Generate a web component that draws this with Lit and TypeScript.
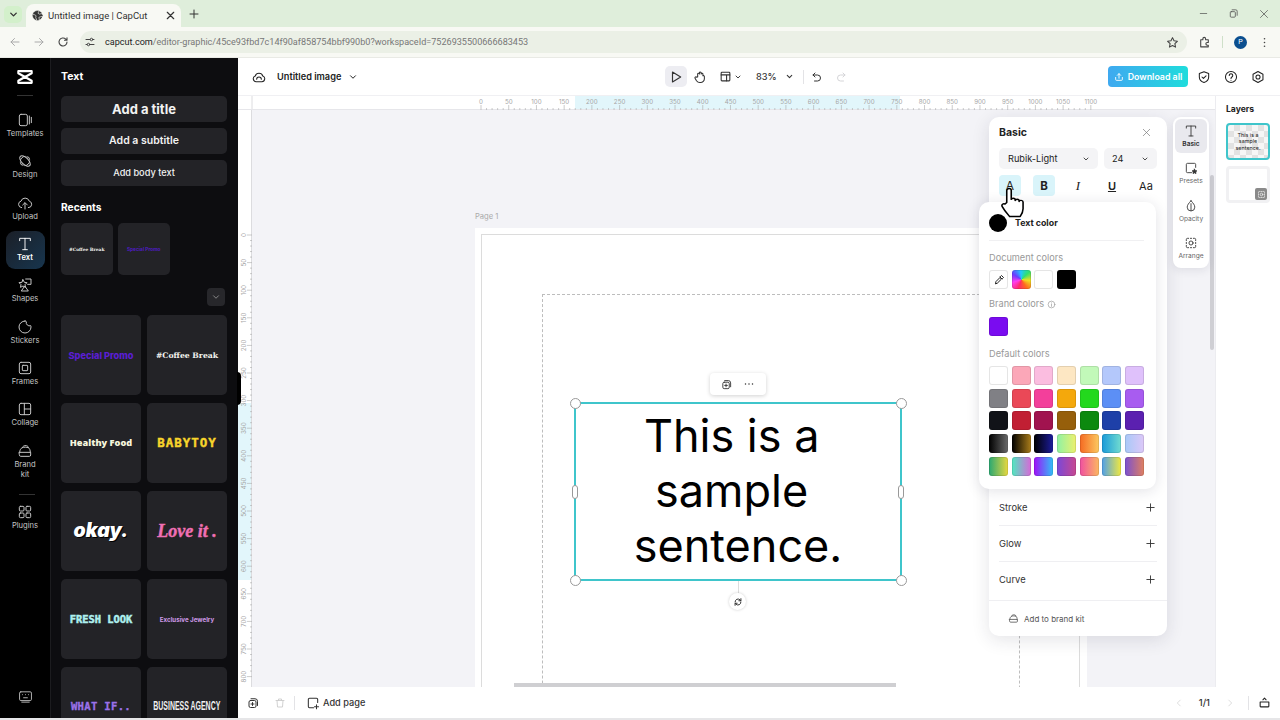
import { LitElement, html, css, svg } from "lit";
import { customElement } from "lit/decorators.js";

const ic = (size: number, body: unknown, sw = 1.8) => html`<svg class="ic" width=${size} height=${size} viewBox="0 0 24 24" fill="none" stroke="currentColor" stroke-width=${sw} stroke-linecap="round" stroke-linejoin="round">${body}</svg>`;

const P = {
  templates: svg`<rect x="3.5" y="3.5" width="12" height="17" rx="2.5"/><path d="M18.5 6v12M21.5 8v8"/>`,
  design: svg`<ellipse cx="12" cy="12" rx="10" ry="5" transform="rotate(45 12 12)"/><path d="M5 12a7 7 0 0 1 7-7M19 12a7 7 0 0 1-7 7M15 5.5a4 4 0 0 1 4 4M9 18.5a4 4 0 0 1-4-4"/>`,
  upload: svg`<path d="M7 19a5 5 0 0 1-1-9.8 6.5 6.5 0 0 1 12.4 0A5 5 0 0 1 17 19"/><path d="M12 21v-9M8.5 15l3.5-3.5 3.5 3.5"/>`,
  text: svg`<path d="M4 7V3.5h16V7M12 3.5v17M8.5 20.5h7"/>`,
  shapes: svg`<path d="M13 3h8v8h-5M9 4l2 4 4 .5-3 3 .8 4L9 13.5 5.2 15.5 6 11.5l-3-3 4-.5z"/><path d="M12 14l5 7H7z"/>`,
  stickers: svg`<path d="M12 3a9 9 0 1 0 9 9c0-1-.2-1.500-.4-2A5 5 0 0 1 14 4c-.5-.7-1.200-1-2-1z"/>`,
  frames: svg`<rect x="3.500" y="3.500" width="17" height="17" rx="2.500"/><rect x="8" y="8" width="8" height="8" rx="1"/>`,
  collage: svg`<rect x="3.500" y="3.500" width="17" height="17" rx="2.500"/><path d="M11 3.500v17M11 12h9.500"/>`,
  brand: svg`<path d="M3.500 14h17v4a2 2 0 0 1-2 2h-13a2 2 0 0 1-2-2zM4 14c0-4 2-6 4-7 .5-2 3-3.500 6-3 2.500.5 3 2 3 3 2 1 3 4 3 7M8 7c3-1 6-1 9 0"/>`,
  plugins: svg`<rect x="3.500" y="3.500" width="7" height="7" rx="1.500"/><rect x="13.500" y="3.500" width="7" height="7" rx="1.500"/><rect x="3.500" y="13.500" width="7" height="7" rx="1.500"/><rect x="13.500" y="13.500" width="7" height="7" rx="1.500"/>`,
  keyboard: svg`<rect x="2.500" y="4.500" width="19" height="14" rx="2"/><path d="M7 9h.01M12 9h.01M17 9h.01M9 14h6M6 21h12"/>`,
  chevD: svg`<path d="M6 9l6 6 6-6"/>`,
  chevL: svg`<path d="M15 5l-7 7 7 7"/>`,
  chevR: svg`<path d="M9 5l7 7-7 7"/>`,
  close: svg`<path d="M5 5l14 14M19 5L5 19"/>`,
  plus: svg`<path d="M12 4v16M4 12h16"/>`,
  cloud: svg`<path d="M7 20a5 5 0 0 1-1.500-9.700 6.800 6.800 0 0 1 13 0A5 5 0 0 1 17 20zM8 16a4 4 0 0 1 8 0"/>`,
  cursor: svg`<path d="M6 3.500l14 8.500-14 8.500z"/>`,
  hand: svg`<path d="M8 12V7a1.500 1.500 0 0 1 3 0V5a1.500 1.500 0 0 1 3 0v2a1.500 1.500 0 0 1 3 0v3a1.500 1.500 0 0 1 2.500 1v4a6.500 6.500 0 0 1-6.500 6.500h-1.500c-2.500 0-4-1-5.500-3L3.500 14c-.8-1.500 1-3 2.300-1.800z" fill="none"/>`,
  layout: svg`<rect x="4" y="4" width="16" height="16" rx="1.500"/><path d="M4 9h16M14 9v11"/>`,
  undo: svg`<path d="M8 4L4 8l4 4M4 8h9a6 6 0 0 1 0 12H7"/>`,
  redo: svg`<path d="M16 4l4 4-4 4M20 8h-9a6 6 0 0 0 0 12h6"/>`,
  shield: svg`<path d="M12 3l8 3v6c0 5-3.500 8-8 9.500C7.500 20 4 17 4 12V6zM8.500 12l2.500 2.500 4.500-4.500"/>`,
  help: svg`<circle cx="12" cy="12" r="9.500"/><path d="M9 9.500a3 3 0 1 1 4.500 2.600c-1 .6-1.500 1.200-1.500 2.400M12 17.500h.01"/>`,
  settings: svg`<path d="M12 2.500l8.500 4.800v9.400L12 21.500l-8.500-4.800V7.300z"/><circle cx="12" cy="12" r="3.500"/>`,
  share: svg`<path d="M4 13v5a2 2 0 0 0 2 2h12a2 2 0 0 0 2-2v-5M12 15V4M8 8l4-4 4 4"/>`,
  copy: svg`<rect x="4" y="7" width="14" height="14" rx="3"/><path d="M8 3.500h8a5 5 0 0 1 5 5V17M11 11v6M8 14h6"/>`,
  dots: svg`<path d="M5 12h.01M12 12h.01M19 12h.01"/>`,
  rotate: svg`<path d="M5 12a7 7 0 0 1 12-5l2 2M19 12a7 7 0 0 1-12 5l-2-2M19 4v5h-5M5 20v-5h5"/>`,
  presets: svg`<path d="M20 11V6a2 2 0 0 0-2-2H6a2 2 0 0 0-2 2v12a2 2 0 0 0 2 2h7"/><path d="M18 14l1.200 2.500 2.800.4-2 1.900.5 2.700-2.500-1.300-2.500 1.300.5-2.700-2-1.900 2.800-.4z" fill="currentColor"/>`,
  drop: svg`<path d="M12 3c4 4.500 6.500 7.500 6.500 11a6.500 6.500 0 0 1-13 0C5.500 10.500 8 7.500 12 3zM12 8v12"/>`,
  arrange: svg`<path d="M4 8V6a2 2 0 0 1 2-2h2M16 4h2a2 2 0 0 1 2 2v2M20 16v2a2 2 0 0 1-2 2h-2M8 20H6a2 2 0 0 1-2-2v-2M11 4h2M11 20h2M4 11v2M20 11v2"/><circle cx="12" cy="12" r="3.500"/>`,
  trash: svg`<path d="M4 7h16M9 7V4h6v3M6 7l1 13h10l1-13"/>`,
  addpage: svg`<path d="M20 11V6a2 2 0 0 0-2-2H6a2 2 0 0 0-2 2v12a2 2 0 0 0 2 2h7M18 15v7M14.500 18.500h7"/>`,
  bag: svg`<path d="M4 11h16v8a1 1 0 0 1-1 1H5a1 1 0 0 1-1-1zM12 4l-3 3M12 4l3 3"/>`,
  globe: svg`<circle cx="12" cy="12" r="10" fill="currentColor"/><path d="M3 10c3 0 5 1 6 3l-1 3 2 5M15 3l-2 4 3 2 5-1M16 21l-1-5 6-2" stroke="#f8f9f4"/>`,
  back: svg`<path d="M20 12H4M11 5l-7 7 7 7"/>`,
  forward: svg`<path d="M4 12h16M13 5l7 7-7 7"/>`,
  reload: svg`<path d="M20 12a8 8 0 1 1-2.500-5.800L20 8.500M20 3.500v5h-5"/>`,
  tune: svg`<path d="M4 7h8M18 7h2M4 17h2M12 17h8"/><circle cx="15" cy="7" r="2.500"/><circle cx="9" cy="17" r="2.500"/>`,
  star: svg`<path d="M12 3l2.800 5.900 6.200.8-4.600 4.400 1.200 6.400L12 17.400l-5.600 3.100 1.200-6.400L3 9.700l6.200-.8z"/>`,
  ext: svg`<path d="M5 8h4V6a2.500 2.500 0 0 1 5 0v2h5v5h-2a2.500 2.500 0 0 0 0 5h2v3H5z" transform="translate(0 -1)"/>`,
  restore: svg`<rect x="5" y="8" width="11" height="12" rx="2"/><path d="M9 4h8a3 3 0 0 1 3 3v9"/>`,
  kebab: svg`<path d="M12 5h.01M12 12h.01M12 19h.01"/>`,
  pick: svg`<path d="M14 6l4 4M5 19l1-4 8-8 3 3-8 8zM15 5l2-2 4 4-2 2" />`,
  info: svg`<circle cx="12" cy="12" r="9"/><path d="M12 11v6M12 7.500h.01"/>`,
  logo: svg`<path d="M4 5h16v2.500L4 16.500V19h16v-2.500L4 7.500z"/>`,
};

const navItems = [
  ["Templates", P.templates], ["Design", P.design], ["Upload", P.upload], ["Text", P.text],
  ["Shapes", P.shapes], ["Stickers", P.stickers], ["Frames", P.frames], ["Collage", P.collage],
] as const;

const tiles = [
  ["Special Promo", "t-promo"], ["#Coffee Break", "t-coffee"], ["Healthy Food", "t-healthy"], ["BABYTOY", "t-baby"],
  ["okay.", "t-okay"], ["Love it .", "t-love"], ["FRESH LOOK", "t-fresh"], ["Exclusive Jewelry", "t-jewel"],
  ["WHAT IF..", "t-what"], ["BUSINESS AGENCY", "t-biz"],
];

const swatches = [
  "#ffffff", "#fba7b8", "#fbbde0", "#fde7c3", "#c2f9b9", "#b4c8fb", "#dfc1fb",
  "#808085", "#ea4857", "#f33f9b", "#f4a80c", "#23d81d", "#5c8ff5", "#a85cf0",
  "#111318", "#c11f33", "#a1134f", "#965f0b", "#0c890f", "#1e40a8", "#5b20b0",
  "linear-gradient(90deg,#000,#6a6a6a)", "linear-gradient(90deg,#000,#a97c1a)", "linear-gradient(90deg,#000,#1c1c9c)", "linear-gradient(90deg,#8ff2a4,#ecf06e)", "linear-gradient(90deg,#f56a22,#fcc961)", "linear-gradient(90deg,#1a9ad9,#72dcd0)", "linear-gradient(90deg,#a8c9f8,#ddc8f8)",
  "linear-gradient(90deg,#2aa872,#e9d83f)", "linear-gradient(90deg,#50e8c0,#d868d8)", "linear-gradient(90deg,#a010f8,#30c0f8)", "linear-gradient(90deg,#7a48d8,#c84890)", "linear-gradient(90deg,#f050a0,#fcb860)", "linear-gradient(90deg,#50a0e8,#f0e840)", "linear-gradient(90deg,#7a50d0,#e08060)",
];

function topRuler() {
  const o = 243, k = 27.72 / 50;
  const parts: unknown[] = [];
  for (let v = 0; v <= 1100; v += 10) {
    const x = o + v * k;
    const major = v % 50 === 0;
    parts.push(svg`<line x1=${x} x2=${x} y1=${major ? 9 : 12} y2="14" stroke="#aaa" stroke-width=".6"/>`);
    if (major) parts.push(svg`<text x=${x} y="8" text-anchor="middle" class="rt">${v}</text>`);
  }
  return html`<svg class="ruler-top" width="977" height="14" viewBox="0 0 977 14"><rect x="337" width="325" height="14" fill="#e2f6fb"/><line x1="14" x2="14" y1="0" y2="14" stroke="#dcdcdf"/><line x1="0" x2="977" y1="13.500" y2="13.500" stroke="#e6e6ea"/>${parts}</svg>`;
}

function leftRuler() {
  const o = 125, k = 27.6 / 50;
  const parts: unknown[] = [];
  for (let v = 0; v <= 800; v += 10) {
    const y = o + v * k;
    const major = v % 50 === 0;
    parts.push(svg`<line y1=${y} y2=${y} x1=${major ? 9 : 12} x2="14" stroke="#aaa" stroke-width=".6"/>`);
    if (major) parts.push(svg`<text transform="translate(7.500 ${y}) rotate(-90)" text-anchor="middle" class="rt">${v}</text>`);
  }
  return html`<svg class="ruler-left" width="14" height="577" viewBox="0 0 14 577"><rect y="293" width="14" height="177" fill="#e2f6fb"/><line x1="13.500" x2="13.500" y1="0" y2="577" stroke="#dcdcdf"/>${parts}</svg>`;
}

@customElement("app-root")
export class AppRoot extends LitElement {
  static styles = css`
    :host { display: flex; flex-direction: column; width: 1280px; height: 720px; overflow: hidden; font-family: Inter, "Liberation Sans", sans-serif; color: #222; background: #e6e6e8; }
    .ic { display: block; flex: none; }
    .tabs { height: 27px; background: #dfeedb; display: flex; align-items: flex-end; flex: none; color: #333; }
    .tabmenu { width: 18px; height: 17px; margin: 0 0 4px 4px; border-radius: 5px; background: #d3f0cb; display: flex; align-items: center; justify-content: center; }
    .tab { width: 155px; height: 23px; margin-left: 4px; background: #f8f9f4; border-radius: 8px 8px 0 0; display: flex; align-items: center; padding: 0 5px 0 6px; box-sizing: border-box; gap: 5px; font: 9.5px Roboto, sans-serif; color: #333; }
    .tab span { flex: 1; white-space: nowrap; }
    .newtab { margin: 0 0 7px 7px; }
    .winctl { margin-left: auto; display: flex; gap: 19px; padding: 0 10px 7px 0; color: #555; }
    .toolbar { height: 31px; background: #f8f9f4; border-bottom: 1px solid #e9eae5; box-sizing: border-box; display: flex; align-items: center; flex: none; padding-left: 3px; color: #444; }
    .toolbar .nv { width: 24px; display: flex; justify-content: center; }
    .dim { color: #aaa; }
    .url { width: 1107px; margin-left: 5px; height: 22px; border-radius: 11px; background: #ebf0e6; display: flex; align-items: center; padding: 0 8px 0 4px; box-sizing: border-box; flex: none; }
    .url .addr { font: 9.08px Roboto, sans-serif; color: #777; margin-left: 9px; white-space: nowrap; }
    .url .addr b { font-weight: 400; color: #222; }
    .url .ic:last-child { margin-left: auto; }
    .tools-r { display: flex; align-items: center; flex: 1; padding-left: 11px; gap: 11px; }
    .avatar { width: 13px; height: 13px; border-radius: 50%; background: #0b4f8f; color: #fff; font: 7px Roboto, sans-serif; display: flex; align-items: center; justify-content: center; }
    .sepv { width: 1px; height: 12px; background: #cfe0c9; }

    .app { height: 660px; display: flex; flex: none; position: relative; }
    .nav { width: 50px; background: #000; border-right: 1px solid #1c1c1f; display: flex; flex-direction: column; align-items: center; flex: none; padding-bottom: 14px; }
    .logo { height: 37px; display: flex; align-items: center; color: #fff; }
    .navsep { width: 16px; height: 1px; background: #333; flex: none; }
    .navlist { margin-top: 11px; display: flex; flex-direction: column; gap: 3.33px; }
    .nitem { width: 39px; height: 38px; border-radius: 9px; box-sizing: border-box; padding-top: 5px; display: flex; flex-direction: column; align-items: center; color: #c4c4c4; font-size: 7.6px; line-height: 10px; text-align: center; }
    .nitem span { margin-top: 1px; }
    .nitem.active { background: linear-gradient(135deg, #1b1f27, #17354e); color: #fff; font-weight: 600; }
    .nitem.tall { height: 48px; }
    .navsep2 { width: 16px; height: 1px; background: #333; margin: 8px 0 4px 4px; flex: none; }
    .kbd { margin-top: auto; color: #bbb; }

    .panel { width: 187px; background: #0d0d10; color: #fff; padding: 0 11px 0 10px; box-sizing: border-box; overflow: hidden; flex: none; }
    .ptitle { height: 38px; display: flex; align-items: center; font-size: 10.5px; font-weight: 700; padding-bottom: 1px; box-sizing: border-box; }
    .addbtn { height: 26px; border-radius: 5px; background: #232327; display: flex; align-items: center; justify-content: center; margin-bottom: 6px; color: #f2f2f2; padding-bottom: 1px; box-sizing: border-box; }
    .a1 { font-size: 13px; font-weight: 700; }
    .a2 { font-size: 10.5px; font-weight: 600; }
    .a3 { font-size: 9.2px; font-weight: 500; }
    .recents { font-size: 10.2px; font-weight: 700; line-height: 12px; margin-top: 15px; }
    .rrow { display: flex; gap: 5.5px; margin-top: 10px; }
    .rthumb { width: 51.500px; height: 52px; background: #232327; border-radius: 5px; display: flex; align-items: center; justify-content: center; white-space: nowrap; }
    .more { width: 18px; height: 18px; border-radius: 4px; background: #27272b; margin: 13px 2px 0 auto; display: flex; align-items: center; justify-content: center; color: #999; }
    .grid { display: grid; grid-template-columns: 80px 80px; grid-auto-rows: 80px; gap: 8px 6px; margin-top: 9px; }
    .tile { background: #232327; border-radius: 5px; display: flex; align-items: center; justify-content: center; white-space: nowrap; text-align: center; }
    .t-promo { color: #5a1ed2; font: 800 9.2px Inter, sans-serif; }
    .t-coffee { color: #f4f4f0; font: 700 7.7px "DejaVu Serif", serif; }
    .t-coffee2 { color: #f4f4f0; font: 700 4.4px "DejaVu Serif", serif; }
    .t-promo2 { color: #4e1cc0; font: 700 4.8px Inter, sans-serif; }
    .t-healthy { color: #f6f6de; font: 800 9.2px "Open Sans", sans-serif; padding-bottom: 2px; box-sizing: border-box; }
    .t-baby { color: #f8d52b; font: 700 12.5px "DejaVu Sans Mono", monospace; letter-spacing: 1px; -webkit-text-stroke: .4px #f8d52b; padding-bottom: 2px; box-sizing: border-box; }
    .t-okay { color: #fff; font: italic 900 19.5px Inter, sans-serif; text-shadow: 1px 1px 0 #000; padding-bottom: 2px; box-sizing: border-box; }
    .t-love { color: #f070b4; font: italic 700 18px "Liberation Serif", serif; -webkit-text-stroke: .4px #f070b4; }
    .t-fresh { color: #aef0ef; font: 700 10.4px "DejaVu Sans Mono", monospace; -webkit-text-stroke: .5px #aef0ef; }
    .t-jewel { color: #cf9ae8; font: 700 6.2px Inter, sans-serif; }
    .t-what { color: #9b72ea; font: 700 10.6px "DejaVu Sans Mono", monospace; letter-spacing: .3px; -webkit-text-stroke: .3px #9b72ea; padding-bottom: 3px; box-sizing: border-box; }
    .t-biz { color: #f0f0f0; font: 700 12px "Liberation Sans", sans-serif; padding-bottom: 3px; box-sizing: border-box; }
    .t-biz span { display: inline-block; transform: scaleX(.58); }
    .collapse { position: absolute; left: 237px; top: 314px; width: 4px; height: 33px; background: #000; border-radius: 0 4px 4px 0; }

    .main { flex: 1; display: flex; flex-direction: column; min-width: 0; background: #fff; }
    .header { height: 38px; display: flex; align-items: center; flex: none; box-sizing: border-box; padding-left: 14px; border-bottom: 1px solid #f0f0f3; position: relative; }
    .title { font-size: 9.2px; font-weight: 600; margin-left: 11px; color: #222; white-space: nowrap; }
    .hl { display: flex; align-items: center; width: 413px; flex: none; color: #222; }
    .hl .chev { margin-left: 7px; }
    .hc { display: flex; align-items: center; color: #333; flex: none; }
    .cursorb { width: 22px; height: 21px; border-radius: 5px; background: #ededf2; display: flex; align-items: center; justify-content: center; }
    .h-hand { margin-left: 6px; } .h-layout { margin-left: 11.5px; } .h-chev1 { margin-left: 2.5px; }
    .zoom { font-size: 9.2px; font-weight: 500; margin-left: 14px; width: 20px; white-space: nowrap; }
    .h-chev2 { margin-left: 8.5px; }
    .vline { width: 1px; height: 14px; background: #e3e3e6; flex: none; }
    .h-vl { margin: 0 7px 0 9.5px; }
    .h-redo { margin-left: 12px; color: #d5d5d8; }
    .download { margin-left: auto; width: 80px; height: 21px; border-radius: 4px; background: linear-gradient(90deg, #3fa9f0, #1fdcdc); color: #fff; font-size: 8.8px; font-weight: 600; display: flex; align-items: center; justify-content: center; gap: 4px; white-space: nowrap; }
    .hr { display: flex; gap: 13px; margin: 0 15px 0 9px; color: #222; }

    .middle { flex: 1; display: flex; min-height: 0; }
    .work { flex: 1; display: flex; flex-direction: column; min-width: 0; background: #fff; }
    .ruler-top, .ruler-left { display: block; flex: none; }
    .rt { font: 6.2px Inter, sans-serif; fill: #a6a6a6; }
    .work-row { flex: 1; display: flex; min-height: 0; }
    .canvas { position: relative; flex: 1; background: #f3f3f7; overflow: hidden; }
    .pagelabel { position: absolute; left: 223px; top: 102px; font-size: 7.6px; color: #aaa; }
    .page { position: absolute; left: 223px; top: 118px; width: 612px; height: 500px; background: #fff; }
    .bleed { position: absolute; left: 6px; top: 6px; width: 599px; height: 500px; border: 1px solid #dcdcdc; box-sizing: border-box; }
    .safe { position: absolute; left: 67px; top: 66px; width: 478px; height: 500px; border: 1px dashed #bdbdbd; box-sizing: border-box; }
    .sel { position: absolute; left: 322px; top: 292px; width: 328px; height: 179px; border: 2px solid #3fc5cb; box-sizing: border-box; display: flex; flex-direction: column; align-items: center; }
    .copy { white-space: pre; font: 400 45px/55.200px Inter, sans-serif; color: #000; text-align: center; margin-top: 4px; }
    .hd { position: absolute; background: #fff; border: 1px solid #999; box-sizing: border-box; }
    .c { width: 11px; height: 11px; border-radius: 50%; }
    .tl { left: -6.500px; top: -6.500px; } .tr { right: -6.500px; top: -6.500px; } .bl { left: -6.500px; bottom: -6.500px; } .br { right: -6.500px; bottom: -6.500px; }
    .s { width: 6px; height: 14px; border-radius: 3px; top: 81px; }
    .ml { left: -4px; } .mr { right: -4px; }
    .minimenu { position: absolute; left: 458px; top: 263px; width: 56px; height: 22px; background: #fff; border-radius: 4px; box-shadow: 0 1px 4px rgba(0,0,0,.18); display: flex; align-items: center; justify-content: center; gap: 11px; color: #333; }
    .stem { position: absolute; left: 485.500px; top: 471px; width: 1px; height: 12px; background: #ddd; }
    .rot { position: absolute; left: 477px; top: 483px; width: 17px; height: 17px; border-radius: 50%; background: #fff; box-shadow: 0 0 3px rgba(0,0,0,.2); display: flex; align-items: center; justify-content: center; color: #333; }
    .hbar { position: absolute; left: 262px; top: 573px; width: 382px; height: 4px; background: #cfcfd2; }
    .vbar { position: absolute; left: 958px; top: 65px; width: 4px; height: 175px; background: #cfcfd4; border-radius: 2px; }

    .basic { position: absolute; left: 737px; top: 7px; width: 178px; height: 519px; background: #fff; border-radius: 10px; box-shadow: 0 4px 18px rgba(30,30,60,.12); display: flex; flex-direction: column; padding: 0 10px; box-sizing: border-box; }
    .bhead { height: 31px; display: flex; align-items: center; justify-content: space-between; font-size: 10.5px; font-weight: 700; padding-right: 5px; flex: none; }
    .bhead .ic { color: #777; }
    .selects { display: flex; gap: 6px; flex: none; }
    .select { height: 21px; border-radius: 5px; background: #f4f4f6; display: flex; align-items: center; justify-content: space-between; padding: 0 8px 0 9px; box-sizing: border-box; font-size: 9.2px; color: #222; }
    .f1 { width: 99px; } .f2 { width: 53px; padding-left: 8px; }
    .fmts { display: flex; margin-top: 6px; justify-content: space-between; padding-right: 0; flex: none; }
    .fb { width: 22px; height: 21px; border-radius: 4px; display: flex; align-items: center; justify-content: center; font-size: 12px; color: #222; margin-right: 12px; }
    .fb.on { background: #d9f4fa; }
    .fb.b { font-weight: 700; font-size: 11.5px; }
    .fb.i { font-style: italic; font-family: "Liberation Serif", serif; font-size: 13px; }
    .fb.u { text-decoration: underline; font-size: 11px; font-weight: 600; }
    .fb.aa { font-size: 11px; margin-right: 0; }
    .rows { margin-top: auto; flex: none; }
    .row { height: 36px; display: flex; align-items: center; justify-content: space-between; font-size: 9.4px; border-bottom: 1px solid #efeff2; color: #333; padding-right: 1px; box-sizing: border-box; }
    .row:last-child { border-bottom: none; height: 35px; }
    .foot { height: 35px; margin: 3px -10px 0; border-top: 1px solid #efeff2; display: flex; align-items: center; padding-left: 19px; gap: 5px; font-size: 8px; color: #555; flex: none; }

    .popup { position: absolute; left: 727px; top: 92px; width: 177px; height: 287px; background: #fff; border-radius: 10px; box-shadow: 0 2px 14px rgba(30,30,60,.13); padding: 0 12px 0 10px; box-sizing: border-box; }
    .phead { height: 39px; padding-top: 4px; box-sizing: border-box; display: flex; align-items: center; gap: 8px; border-bottom: 1px solid #f0f0f2; font-size: 8.8px; font-weight: 700; }
    .phead span { margin-top: -2px; }
    .dot { width: 18px; height: 18px; background: #000; border-radius: 50%; }
    .plabel { font-size: 9.2px; line-height: 12px; color: #999; display: flex; align-items: center; gap: 3px; }
    .m1 { margin-top: 11px; } .m2 { margin-top: 9px; } .m3 { margin-top: 12px; }
    .swrow { display: flex; gap: 3.670px; margin-top: 6px; }
    .swrow.m7 { margin-top: 7px; }
    .sw { width: 19px; height: 19px; border-radius: 3px; box-sizing: border-box; box-shadow: inset 0 0 0 1px rgba(0,0,0,.1); display: flex; align-items: center; justify-content: center; color: #222; }
    .swgrid { display: grid; grid-template-columns: repeat(7, 19px); grid-auto-rows: 19px; gap: 3.670px; margin-top: 6px; }
    .rainbow { background: conic-gradient(from 200deg, #ff2a6a, #ff3df0, #6a3dff, #20c8ff, #30e070, #f0e020, #ff6a20, #ff2a6a); }
    .cursor { position: absolute; left: 748px; top: 77px; }

    .strip { position: absolute; left: 921px; top: 7px; width: 36px; height: 151px; background: #fff; border-radius: 8px; box-shadow: 0 2px 10px rgba(30,30,60,.1); padding: 2px; box-sizing: border-box; display: flex; flex-direction: column; gap: 4px; }
    .st { height: 33.500px; border-radius: 6px; display: flex; flex-direction: column; align-items: center; justify-content: center; font-size: 6.600px; color: #666; gap: 2px; }
    .st .ic { color: #333; }
    .st.on { background: #e9e9ee; color: #333; font-weight: 600; }

    .layers { width: 65px; flex: none; background: #fff; border-left: 1px solid #ececf0; box-sizing: border-box; padding-left: 10px; }
    .ltitle { font-size: 8.6px; font-weight: 700; height: 26px; display: flex; align-items: center; }
    .thumb { width: 44px; height: 37px; border-radius: 4px; box-sizing: border-box; }
    .thumb.a { margin-top: 1px; border: 2px solid #3fc5cb; background: repeating-conic-gradient(#e2e2e2 0 25%, #f6f6f6 0 50%) 0 0 / 12px 12px; display: flex; align-items: center; justify-content: center; font-size: 5.4px; line-height: 6.300px; text-align: center; color: #222; white-space: pre; }
    .thumb.b { margin-top: 6px; border: 3px solid #f1f1f3; background: #fff; position: relative; }
    .badge { position: absolute; right: 0; bottom: 0; width: 12px; height: 12px; border-radius: 2px; background: #8a8a8a; color: #eee; display: flex; align-items: center; justify-content: center; }

    .bottom { height: 31px; flex: none; background: #fff; display: flex; align-items: center; padding-left: 9px; color: #333; }
    .bottom .tr2 { color: #ccc; margin-left: 15px; }
    .bottom .vline { margin: 0 10px 0 8px; }
    .addp { font-size: 9.2px; font-weight: 500; margin-left: 3px; white-space: nowrap; }
    .bottom .ap { margin-left: 1px; }
    .pager { margin-left: auto; display: flex; align-items: center; color: #ccc; }
    .pn { font-size: 9.4px; font-weight: 500; color: #333; margin: 0 15px; }
    .pager .vline { margin: 0 9px 0 13px; }
    .pager .bag { color: #222; margin-right: 9px; }
  `;

  render() {
    return html`
      <div class="tabs">
        <div class="tabmenu">${ic(11, P.chevD, 3)}</div>
        <div class="tab">${ic(11, P.globe, 1.400)}<span>Untitled image | CapCut</span>${ic(11, P.close, 2.600)}</div>
        <div class="newtab">${ic(12, P.plus, 2)}</div>
        <div class="winctl">${ic(11, svg`<path d="M5 12h14"/>`, 1.600)}${ic(11, P.restore, 1.800)}${ic(12, P.close, 1.500)}</div>
      </div>
      <div class="toolbar">
        <div class="nv dim">${ic(12, P.back, 2)}</div>
        <div class="nv dim">${ic(12, P.forward, 2)}</div>
        <div class="nv">${ic(12, P.reload, 2.200)}</div>
        <div class="url">
          ${ic(12, P.tune, 2)}
          <span class="addr"><b>capcut.com</b>/editor-graphic/45ce93fbd7c14f90af858754bbf990b0?workspaceId=7526935500666683453</span>
          ${ic(13, P.star, 2)}
        </div>
        <div class="tools-r">
          ${ic(13, P.ext, 2)}<div class="sepv"></div><div class="avatar">P</div>${ic(13, P.kebab, 3)}
        </div>
      </div>

      <div class="app">
        <div class="nav">
          <div class="logo">${ic(20, P.logo, 2.600)}</div>
          <div class="navsep"></div>
          <div class="navlist">
            ${navItems.map(([n, p]) => html`<div class="nitem ${n === "Text" ? "active" : ""}">${ic(16, p, n === "Text" ? 1.400 : 1.500)}<span>${n}</span></div>`)}
            <div class="nitem tall">${ic(16, P.brand, 1.500)}<span>Brand<br />kit</span></div>
          </div>
          <div class="navsep2"></div>
          <div class="nitem">${ic(16, P.plugins, 1.500)}<span>Plugins</span></div>
          <div class="kbd">${ic(15, P.keyboard, 1.500)}</div>
        </div>

        <div class="panel">
          <div class="ptitle">Text</div>
          <div class="addbtn a1">Add a title</div>
          <div class="addbtn a2">Add a subtitle</div>
          <div class="addbtn a3">Add body text</div>
          <div class="recents">Recents</div>
          <div class="rrow">
            <div class="rthumb t-coffee2">#Coffee Break</div>
            <div class="rthumb t-promo2">Special Promo</div>
          </div>
          <div class="more">${ic(10, P.chevD, 2)}</div>
          <div class="grid">${tiles.map(([t, c]) => html`<div class="tile ${c}"><span>${t}</span></div>`)}</div>
        </div>
        <div class="collapse"></div>

        <div class="main">
          <div class="header">
            <div class="hl">
              ${ic(14, P.cloud, 1.800)}<span class="title">Untitled image</span><span class="chev">${ic(10, P.chevD, 2.400)}</span>
            </div>
            <div class="hc">
              <div class="cursorb">${ic(14, P.cursor, 2)}</div>
              <span class="h-hand">${ic(14, P.hand, 1.800)}</span>
              <span class="h-layout">${ic(13, P.layout, 2)}</span>
              <span class="h-chev1">${ic(8, P.chevD, 2.800)}</span>
              <span class="zoom">83%</span>
              <span class="h-chev2">${ic(9, P.chevD, 2.800)}</span>
              <div class="vline h-vl"></div>
              ${ic(12, P.undo, 2)}
              <span class="h-redo">${ic(12, P.redo, 2)}</span>
            </div>
            <div class="download">${ic(10, P.share, 2.200)}Download all</div>
            <div class="hr">${ic(14, P.shield, 1.800)}${ic(14, P.help, 1.800)}${ic(14, P.settings, 1.800)}</div>
          </div>

          <div class="middle">
            <div class="work">
              ${topRuler()}
              <div class="work-row">
                ${leftRuler()}
                <div class="canvas">
                  <div class="pagelabel">Page 1</div>
                  <div class="page"><div class="bleed"></div><div class="safe"></div></div>
                  <div class="sel">
                    <div class="copy">${"This is a \nsample \nsentence."}</div>
                    <i class="hd c tl"></i><i class="hd c tr"></i><i class="hd c bl"></i><i class="hd c br"></i>
                    <i class="hd s ml"></i><i class="hd s mr"></i>
                  </div>
                  <div class="minimenu">${ic(11, P.copy, 2)}${ic(12, P.dots, 3)}</div>
                  <div class="stem"></div>
                  <div class="rot">${ic(10, P.rotate, 2.400)}</div>
                  <div class="hbar"></div>
                  <div class="vbar"></div>

                  <div class="basic">
                    <div class="bhead"><span>Basic</span>${ic(11, P.close, 1.500)}</div>
                    <div class="selects">
                      <div class="select f1">Rubik-Light ${ic(8, P.chevD, 2.400)}</div>
                      <div class="select f2">24 ${ic(8, P.chevD, 2.400)}</div>
                    </div>
                    <div class="fmts">
                      <div class="fb on">A</div>
                      <div class="fb on b">B</div>
                      <div class="fb i">I</div>
                      <div class="fb u">U</div>
                      <div class="fb aa">Aa</div>
                    </div>
                    <div class="rows">
                      <div class="row">Stroke ${ic(11, P.plus, 2)}</div>
                      <div class="row">Glow ${ic(11, P.plus, 2)}</div>
                      <div class="row">Curve ${ic(11, P.plus, 2)}</div>
                    </div>
                    <div class="foot">${ic(11, P.brand, 1.800)}Add to brand kit</div>
                  </div>

                  <div class="popup">
                    <div class="phead"><div class="dot"></div><span>Text color</span></div>
                    <div class="plabel m1">Document colors</div>
                    <div class="swrow">
                      <div class="sw">${ic(12, P.pick, 2)}</div>
                      <div class="sw rainbow"></div>
                      <div class="sw"></div>
                      <div class="sw" style="background:#000"></div>
                    </div>
                    <div class="plabel m2">Brand colors ${ic(9, P.info, 1.800)}</div>
                    <div class="swrow m7"><div class="sw" style="background:#7a0cf0"></div></div>
                    <div class="plabel m3">Default colors</div>
                    <div class="swgrid">${swatches.map((c) => html`<div class="sw" style="background:${c}"></div>`)}</div>
                  </div>

                  <svg class="cursor" width="27" height="31" viewBox="0 0 24 30" preserveAspectRatio="none" fill="#fff" stroke="#000" stroke-width="1.400" stroke-linejoin="round">
                    <path d="M6 15V3.500a2 2 0 0 1 4 0V12c0-1.500 3.500-1.500 3.500 0v1c0-1.500 3.500-1.500 3.500 0v1c0-1.500 3.500-1.500 3.500.5V21c0 3-1 5-2.500 7.500H8.500C6.500 26 4 23 2 19c-1-2 1-3.500 2.500-2.500z"/>
                  </svg>

                  <div class="strip">
                    <div class="st on">${ic(14, P.text, 1.500)}Basic</div>
                    <div class="st">${ic(14, P.presets, 1.500)}Presets</div>
                    <div class="st">${ic(14, P.drop, 1.500)}Opacity</div>
                    <div class="st">${ic(14, P.arrange, 1.500)}Arrange</div>
                  </div>
                </div>
              </div>
            </div>
            <div class="layers">
              <div class="ltitle">Layers</div>
              <div class="thumb a">${"This is a\nsample\nsentence."}</div>
              <div class="thumb b"><div class="badge">${ic(9, P.arrange, 2)}</div></div>
            </div>
          </div>

          <div class="bottom">
            ${ic(12, P.copy, 2)}
            <span class="tr2">${ic(12, P.trash, 1.800)}</span>
            <div class="vline"></div>
            <span class="ap">${ic(14, P.addpage, 1.800)}</span>
            <span class="addp">Add page</span>
            <div class="pager">
              ${ic(10, P.chevL, 1.600)}
              <span class="pn">1/1</span>
              ${ic(10, P.chevR, 1.600)}
              <div class="vline"></div>
              <span class="bag">${ic(13, P.bag, 2)}</span>
            </div>
          </div>
        </div>
      </div>
    `;
  }
}
